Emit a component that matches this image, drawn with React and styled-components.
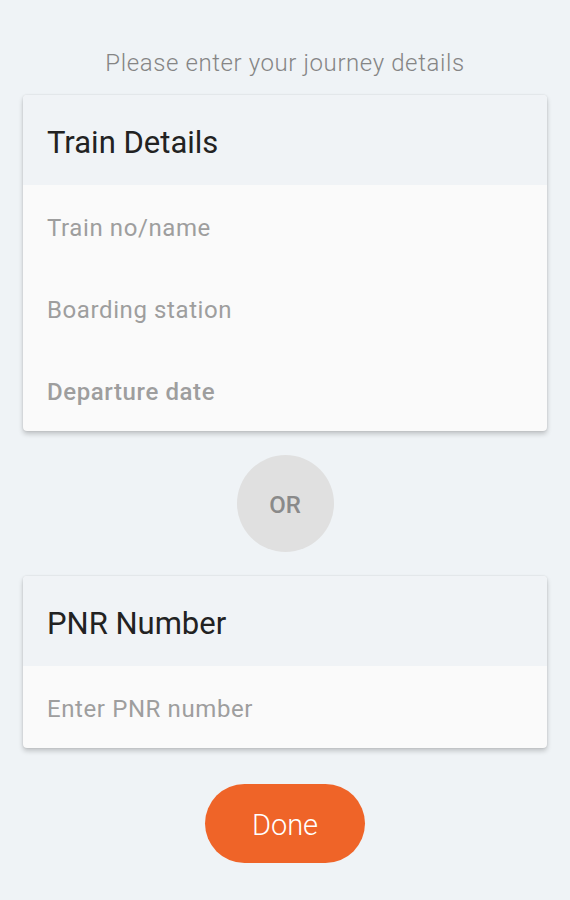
import React from "react";
import styled, { createGlobalStyle } from "styled-components";

const GlobalStyle = createGlobalStyle`
  html, body {
    margin: 0;
    padding: 0;
    background: #eff3f6;
    font-family: Roboto, "Noto Sans", sans-serif;
  }
`;

const Page = styled.div`
  min-height: 900px;
  padding: 48px 23px 0;
  box-sizing: border-box;
  display: flex;
  flex-direction: column;
  align-items: center;
`;

const Subtitle = styled.p`
  margin: 0 0 17px;
  font-size: 24px;
  line-height: 30px;
  font-weight: 300;
  letter-spacing: 0.6px;
  color: #858585;
`;

const Card = styled.div`
  width: 100%;
  border-radius: 4px;
  overflow: hidden;
  background: #fafafa;
  box-shadow: 0 3px 5px rgba(0, 0, 0, 0.2), 0 0 2px rgba(0, 0, 0, 0.12);
`;

const CardHeader = styled.div`
  height: 90px;
  display: flex;
  align-items: center;
  padding: 4px 24px 0;
  box-sizing: border-box;
  background: #f0f3f6;
  font-size: 31px;
  font-weight: 400;
  color: #222;
`;

const Field = styled.div`
  height: 82px;
  display: flex;
  align-items: center;
  padding: 3px 24px 0;
  box-sizing: border-box;
  font-size: 24px;
  letter-spacing: 0.6px;
  font-weight: ${(p) => (p.$strong ? 500 : 400)};
  color: #9e9e9e;
`;

const OrBadge = styled.div`
  width: 97px;
  height: 97px;
  margin: 24px 0;
  border-radius: 50%;
  background: #e0e0e0;
  display: flex;
  align-items: center;
  justify-content: center;
  padding-top: 2px;
  box-sizing: border-box;
  font-size: 24px;
  font-weight: 500;
  color: #8a8a8a;
`;

const DoneButton = styled.button`
  margin-top: 36px;
  width: 160px;
  height: 79px;
  border: none;
  border-radius: 40px;
  background: #ef6428;
  color: #fff;
  padding-top: 4px;
  font-family: Roboto, "Noto Sans", sans-serif;
  font-size: 29px;
  font-weight: 300;
  cursor: pointer;
`;

export default function App() {
  return (
    <>
      <GlobalStyle />
      <Page>
        <Subtitle>Please enter your journey details</Subtitle>
        <Card>
          <CardHeader>Train Details</CardHeader>
          <Field>Train no/name</Field>
          <Field>Boarding station</Field>
          <Field $strong>Departure date</Field>
        </Card>
        <OrBadge>OR</OrBadge>
        <Card>
          <CardHeader>PNR Number</CardHeader>
          <Field>Enter PNR number</Field>
        </Card>
        <DoneButton>Done</DoneButton>
      </Page>
    </>
  );
}
